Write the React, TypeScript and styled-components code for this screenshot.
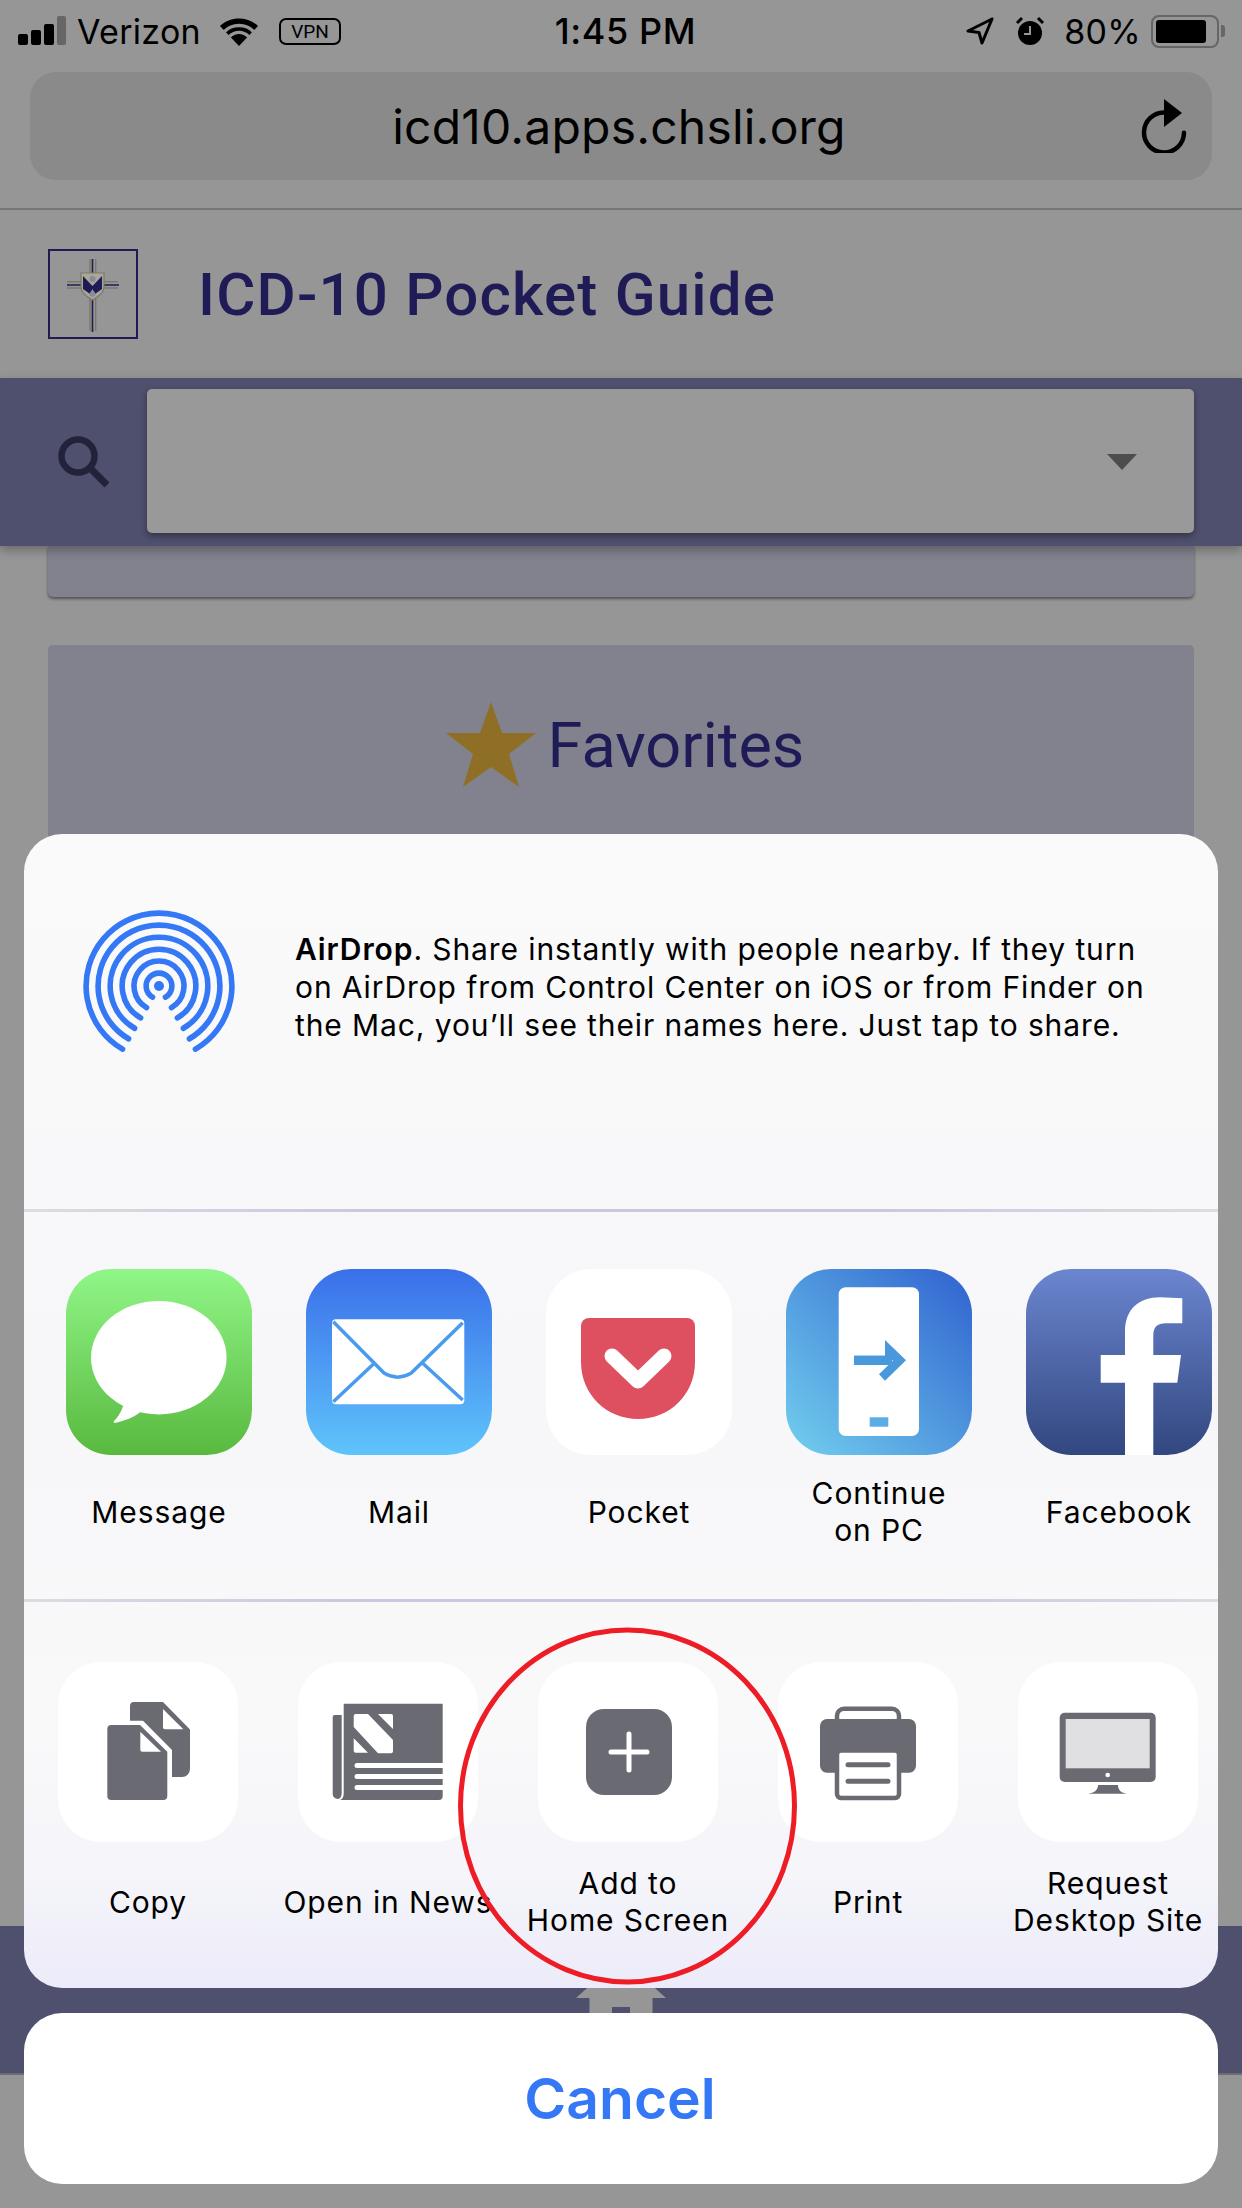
import { ReactNode } from "react";
import styled, { createGlobalStyle } from "styled-components";

const GlobalStyle = createGlobalStyle`
  html, body {
    margin: 0;
    padding: 0;
    background: #969696;
  }
  * {
    box-sizing: border-box;
  }
`;

const Page = styled.div`
  position: relative;
  display: flex;
  flex-direction: column;
  width: 1242px;
  height: 2208px;
  overflow: hidden;
  background: #969696;
  font-family: "Liberation Sans", sans-serif;
`;

const StatusBar = styled.div`
  display: grid;
  grid-template-columns: 1fr auto 1fr;
  align-items: center;
  height: 62px;
  padding: 0 17px 0 18px;
  color: #000;
  font-family: Inter, sans-serif;
  font-size: 34px;
  letter-spacing: 0.3px;
`;

const StatusGroup = styled.div<{ $end?: boolean }>`
  display: flex;
  align-items: center;
  justify-content: ${(p) => (p.$end ? "flex-end" : "flex-start")};
`;

const Carrier = styled.span`
  margin: 0 17px 0 9px;
`;

const Clock = styled.span`
  font-size: 36px;
  font-weight: 500;
  letter-spacing: 0.6px;
  margin-left: 8px;
`;

const VpnBadge = styled.span`
  display: flex;
  align-items: center;
  justify-content: center;
  width: 62px;
  height: 27px;
  margin-left: 19px;
  border: 2px solid #000;
  border-radius: 7px;
  font-family: Roboto, sans-serif;
  font-size: 19px;
  letter-spacing: 0;
`;

const Percent = styled.span`
  margin: 0 10px 0 19px;
`;

const BatteryShell = styled.div`
  display: flex;
  align-items: center;
  width: 68px;
  height: 33px;
  padding: 3px;
  border: 2px solid #666;
  border-radius: 8px;
`;

const BatteryLevel = styled.div`
  width: 50px;
  height: 23px;
  background: #000;
  border-radius: 3px;
`;

const BatteryNub = styled.div`
  width: 4px;
  height: 12px;
  margin-left: 2px;
  background: #666;
  border-radius: 0 3px 3px 0;
`;

const BrowserBar = styled.div`
  height: 148px;
  padding: 10px 30px 0;
  border-bottom: 2px solid #767676;
`;

const UrlPill = styled.div`
  display: grid;
  grid-template-columns: 68px 1fr 64px;
  align-items: center;
  height: 108px;
  padding-right: 8px;
  background: #8a8a8a;
  border-radius: 26px;
`;

const UrlText = styled.span`
  text-align: center;
  color: #000;
  font-family: Inter, sans-serif;
  font-size: 48px;
  letter-spacing: 0.2px;
`;

const AppHeader = styled.div`
  display: flex;
  align-items: center;
  gap: 60px;
  height: 168px;
  padding-left: 48px;
`;

const LogoBox = styled.div`
  width: 90px;
  height: 90px;
  border: 2px solid #1f1b56;
`;

const AppTitle = styled.h1`
  margin: 0;
  color: #1f1b56;
  font-family: Roboto, sans-serif;
  font-size: 60px;
  font-weight: 500;
  letter-spacing: 1.2px;
`;

const SearchBar = styled.div`
  position: relative;
  z-index: 1;
  display: flex;
  align-items: center;
  height: 168px;
  padding: 0 48px 0 57px;
  gap: 36px;
  background: #4f4f6e;
  box-shadow: 0 4px 10px rgba(0, 0, 0, 0.3);
`;

const SelectBox = styled.div`
  display: flex;
  align-items: center;
  justify-content: flex-end;
  flex: 1;
  height: 144px;
  margin-top: -2px;
  padding-right: 57px;
  background: #999;
  border-radius: 5px;
  box-shadow: 0 3px 6px rgba(0, 0, 0, 0.35);
`;

const Caret = styled.div`
  width: 0;
  height: 0;
  margin-top: 2px;
  border-left: 15.5px solid transparent;
  border-right: 15.5px solid transparent;
  border-top: 16px solid #4d4d4d;
`;

const Content = styled.div`
  display: flex;
  flex-direction: column;
  flex: 1;
  gap: 48px;
  min-height: 0;
  padding: 0 48px;
`;

const CardTail = styled.div`
  height: 51px;
  background: #82828f;
  border-radius: 0 0 5px 5px;
  box-shadow: 0 2px 3px rgba(0, 0, 0, 0.45);
`;

const FavoritesCard = styled.div`
  display: flex;
  justify-content: center;
  flex: 1;
  gap: 12px;
  padding: 57px 0 0 8px;
  background: #82828f;
  border-radius: 5px 5px 0 0;
`;

const FavoritesLabel = styled.span`
  margin-top: 8px;
  color: #1f1b56;
  font-family: Roboto, sans-serif;
  font-size: 63px;
  line-height: 72px;
`;

const FooterBar = styled.div`
  display: flex;
  justify-content: center;
  height: 149px;
  padding-top: 18px;
  background: #4f4f6e;
  border-bottom: 2px solid #6c6c78;
`;

const BottomGap = styled.div`
  height: 133px;
`;

const SheetLayer = styled.div`
  position: absolute;
  left: 24px;
  right: 24px;
  bottom: 24px;
  z-index: 2;
  display: flex;
  flex-direction: column;
  gap: 25px;
`;

const Sheet = styled.div`
  display: flex;
  flex-direction: column;
  height: 1154px;
  overflow: hidden;
  border-radius: 38px;
  background: linear-gradient(#fafafb 0, #f7f7f9 50%, #f9f9fa 78%, #f5f5fa 90%, #ecebf9 100%);
`;

const AirDropSection = styled.div`
  display: flex;
  gap: 56px;
  height: 375px;
  padding: 72px 0 0 55px;
`;

const AirDropText = styled.p`
  margin: 24px 0 0;
  color: #000;
  font-family: Inter, sans-serif;
  font-size: 30px;
  line-height: 38px;
  letter-spacing: 0.9px;
  white-space: nowrap;

  b {
    font-weight: 600;
  }
`;

const Separator = styled.div`
  flex: none;
  height: 3px;
  background: linear-gradient(90deg, #dcdce2, #c8c8de 30%, #c8c8de 70%, #dcdce2);
`;

const ShareRow = styled.div<{ $inset: number; $top: number; $height?: number }>`
  display: grid;
  flex: ${(p) => (p.$height ? "none" : "1")};
  grid-template-columns: repeat(5, 240px);
  align-content: start;
  height: ${(p) => (p.$height ? `${p.$height}px` : "auto")};
  padding: ${(p) => p.$top}px 0 0 ${(p) => p.$inset}px;
`;

const ShareCell = styled.div`
  display: flex;
  flex-direction: column;
  align-items: center;
`;

const Squircle = styled.div<{ $size: number; $fill: string }>`
  flex: none;
  width: ${(p) => p.$size}px;
  height: ${(p) => p.$size}px;
  overflow: hidden;
  border-radius: ${(p) => Math.round(p.$size * 0.24)}px;
  background: ${(p) => p.$fill};

  svg {
    display: block;
  }
`;

const ShareLabel = styled.div<{ $gap: number }>`
  display: flex;
  align-items: center;
  height: 74px;
  margin-top: ${(p) => p.$gap}px;
  text-align: center;
  color: #000;
  font-family: Inter, sans-serif;
  font-size: 30px;
  line-height: 37px;
  letter-spacing: 0.9px;
  white-space: nowrap;
`;

const CancelButton = styled.div`
  display: flex;
  align-items: center;
  justify-content: center;
  height: 171px;
  padding-right: 2px;
  background: #fff;
  border-radius: 38px;
  color: #3478f6;
  font-family: Inter, sans-serif;
  font-size: 57px;
  font-weight: 600;
`;

const Annotation = styled.svg`
  position: absolute;
  left: 458px;
  top: 1627px;
  z-index: 3;
`;

const GLYPH = "#6a6a72";

const SignalIcon = () => (
  <svg width="50" height="32" viewBox="0 0 50 32">
    <rect x="0" y="19" width="10" height="11" rx="2" fill="#000" />
    <rect x="13" y="15" width="10" height="15" rx="2" fill="#000" />
    <rect x="26" y="9" width="10" height="21" rx="2" fill="#000" />
    <rect x="39" y="1" width="9" height="29" rx="2" fill="#666" />
  </svg>
);

const WifiIcon = () => (
  <svg width="42" height="30" viewBox="0 0 42 30">
    <path d="M21 30 2 10C12 0 30 0 40 10Z" fill="#000" />
    <path d="M6.5 15.5C14 7.5 28 7.5 35.5 15.5M11.5 20.5C17 15 25 15 30.5 20.5" fill="none" stroke="#969696" strokeWidth="3.4" />
  </svg>
);

const LocationIcon = () => (
  <svg width="28" height="28" viewBox="0 0 28 28">
    <path d="M26 2 2 14l11 1.5L16 26Z" fill="none" stroke="#000" strokeWidth="3" strokeLinejoin="round" />
  </svg>
);

const AlarmIcon = () => (
  <svg width="30" height="30" viewBox="0 0 30 30" style={{ marginLeft: 21 }}>
    <circle cx="15" cy="17" r="12" fill="#000" />
    <path d="M15 10v8h-6" fill="none" stroke="#969696" strokeWidth="2" />
    <path d="M2 7 7 2M28 7l-5-5" fill="none" stroke="#000" strokeWidth="3" />
  </svg>
);

const ReloadIcon = () => (
  <svg width="48" height="54" viewBox="0 0 48 54">
    <path d="M24 13.5A20 20 0 1 0 44 33" fill="none" stroke="#000" strokeWidth="4.5" strokeLinecap="round" transform="rotate(2 24 33)" />
    <path d="M24 0 42 14 24 28Z" fill="#000" />
  </svg>
);

const CrestIcon = () => (
  <svg width="86" height="86" viewBox="0 0 86 86">
    <path d="M40 8v72M45.700 8v72M17 30.700h14M17 37h14M54 30.700h14M54 37h14" stroke="#7e7868" strokeWidth="1.4" />
    <path d="M42.500 8v73M17 34h52" stroke="#1f1b56" strokeWidth="1.6" />
    <path d="M31 22h23v14c0 6-6 10-11.500 13-5.500-3-11.500-7-11.500-13Z" fill="#a9a79a" stroke="#7e7868" strokeWidth="1.200" />
    <path d="M33 25 42.500 35 52 25V38L45 43 42.500 38 40 43 33 38Z" fill="#1f1b56" />
    <circle cx="42.500" cy="28" r="3" fill="#8a8a9a" />
    <circle cx="42.500" cy="43" r="2.800" fill="#8a8a9a" />
  </svg>
);

const SearchIcon = () => (
  <svg width="54" height="54" viewBox="0 0 54 54" style={{ flex: "none" }}>
    <circle cx="21" cy="21" r="16.5" fill="none" stroke="#22223a" strokeWidth="6.5" />
    <path d="M33 33 50 50" stroke="#22223a" strokeWidth="7" />
  </svg>
);

const StarIcon = () => (
  <svg width="90" height="85" viewBox="0 0 90 85">
    <path d="M45 0 56 31 90 31 63 52 73 85 45 65 17 85 27 52 0 31 34 31Z" fill="#8f6f25" />
  </svg>
);

const HomeIcon = () => (
  <svg width="108" height="108" viewBox="0 0 24 24">
    <path d="M10 20v-6h4v6h5v-8h3L12 3 2 12h3v8z" fill="#969696" />
  </svg>
);

const AirDropIcon = () => {
  const angle = (30 * Math.PI) / 180;
  return (
    <svg width="160" height="160" viewBox="0 0 160 160">
      <circle cx="80" cy="80" r="5" fill="#3478f6" />
      {[12.9, 25, 36.8, 48.8, 60.9, 72.9].map((r) => {
        const dx = (r * Math.sin(angle)).toFixed(2);
        const y = (80 + r * Math.cos(angle)).toFixed(2);
        return (
          <path
            key={r}
            d={`M${80 - Number(dx)} ${y}A${r} ${r} 0 1 1 ${80 + Number(dx)} ${y}`}
            fill="none"
            stroke="#3478f6"
            strokeWidth="5.6"
            strokeLinecap="round"
          />
        );
      })}
    </svg>
  );
};

const MessageGlyph = () => (
  <svg width="186" height="186" viewBox="0 0 186 186">
    <ellipse cx="92.8" cy="88.7" rx="67.8" ry="56.7" fill="#fff" />
    <path d="M52 130c6 4 6 6 4 10-2 5-5 9-8 12-1 2 1 2 3 1.500 8-2 16-5 23-10Z" fill="#fff" />
  </svg>
);

const MailGlyph = () => (
  <svg width="186" height="186" viewBox="0 0 186 186">
    <rect x="26" y="50.300" width="132.300" height="85" rx="4" fill="#fff" />
    <path
      d="M27.300 52.700 78.300 104.300Q91.700 112 105 104.300L156.700 53.700M27.300 132.700 68.300 94.300M116.700 94.300 156.700 131"
      fill="none"
      stroke="#4a9bee"
      strokeWidth="3.500"
    />
  </svg>
);

const PocketGlyph = () => (
  <svg width="186" height="186" viewBox="0 0 186 186">
    <path d="M35 57a8 8 0 0 1 8-8h98a8 8 0 0 1 8 8v36c0 32-25 57-57 57s-57-25-57-57Z" fill="#de4f5f" />
    <path d="M66 87 92 112 118 87" fill="none" stroke="#fff" strokeWidth="15" strokeLinecap="round" strokeLinejoin="round" />
  </svg>
);

const ContinueGlyph = () => (
  <svg width="186" height="186" viewBox="0 0 186 186">
    <rect x="52.700" y="18.300" width="80.300" height="148.700" rx="7" fill="#fff" />
    <path d="M68 86.700h31V71l21 20.300-21 20.400-6-6.400 14.300-14h-1.300V96H68Z" fill="#4a98dc" />
    <path d="M68 86.700h33V96H68Z" fill="#4a98dc" />
    <rect x="83.700" y="148.300" width="18.600" height="9.400" fill="#5aaee5" />
  </svg>
);

const FacebookGlyph = () => (
  <svg width="186" height="186" viewBox="0 0 186 186">
    <path
      d="M156.300 29.300V54.300H140C131 54.300 127.300 58 127.300 67V86H155L151.300 113.700H127.300V186H99V113.700H74.700V86H99V63C99 40 113 28.300 134 28.300Z"
      fill="#fff"
    />
  </svg>
);

const CopyGlyph = () => (
  <svg width="180" height="180" viewBox="0 0 180 180">
    <path d="M72 44a4 4 0 0 1 4-4H105L132 67.500V107a8 8 0 0 1-8 8H114V88L85 58.700H72Z" fill={GLYPH} />
    <path d="M105 47 125.300 67.200H107a2 2 0 0 1-2-2Z" fill="#fff" />
    <path d="M53.300 63H82L109.300 89.700V134a4 4 0 0 1-4 4H53.300a4 4 0 0 1-4-4V67a4 4 0 0 1 4-4Z" fill={GLYPH} />
    <path d="M82.300 69.700 103 89.700H84.300a2 2 0 0 1-2-2Z" fill="#fff" />
  </svg>
);

const NewsGlyph = () => (
  <svg width="180" height="180" viewBox="0 0 180 180">
    <path d="M34.700 55a2 2 0 0 1 2-2h7V131c0 3-1.500 6-4 6a5 5 0 0 1-5-5Z" fill={GLYPH} />
    <path d="M45.700 41.700H144.700V134a4 4 0 0 1-4 4H42c3-1 3.700-4 3.700-7Z" fill={GLYPH} />
    <path d="M55.700 54a2 2 0 0 1 2-2H70L95 78V89.300a2 2 0 0 1-2 2H80L55.700 65ZM80 52H93a2 2 0 0 1 2 2V67ZM55.700 76.300 70 90.700H57.700a2 2 0 0 1-2-2Z" fill="#fff" />
    <path d="M59 103.500H144.700M59 114.500H144.700M59 125.500H144.700" stroke="#fff" strokeWidth="5" strokeLinecap="round" />
  </svg>
);

const AddGlyph = () => (
  <svg width="180" height="180" viewBox="0 0 180 180">
    <rect x="48" y="47" width="86" height="86" rx="18" fill={GLYPH} />
    <path d="M91 72V108M73 90H109" stroke="#fff" strokeWidth="5" strokeLinecap="round" />
  </svg>
);

const PrintGlyph = () => (
  <svg width="180" height="180" viewBox="0 0 180 180">
    <rect x="59" y="46.700" width="62" height="24" rx="7" fill="#fff" stroke={GLYPH} strokeWidth="4.500" />
    <rect x="42" y="57" width="96" height="53.700" rx="7" fill={GLYPH} />
    <rect x="59" y="88.500" width="62" height="47.500" rx="4" fill="#fff" stroke={GLYPH} strokeWidth="4.500" />
    <path d="M70 102.700H110M70 119.300H110" stroke={GLYPH} strokeWidth="5" strokeLinecap="round" />
  </svg>
);

const DesktopGlyph = () => (
  <svg width="180" height="180" viewBox="0 0 180 180">
    <rect x="41.700" y="50.700" width="96" height="69.300" rx="5" fill={GLYPH} />
    <rect x="47.700" y="57" width="84" height="49.300" fill="#e0e0e2" />
    <circle cx="89.700" cy="113" r="2.300" fill="#fff" />
    <path d="M80 123h20c0 5 3 8 9 8.700H70.300c6-.7 9.700-3.700 9.700-8.700Z" fill={GLYPH} />
  </svg>
);

interface ShareItem {
  lines: string[];
  fill: string;
  glyph: ReactNode;
}

const appItems: ShareItem[] = [
  { lines: ["Message"], fill: "linear-gradient(#90f687, #59b93f)", glyph: <MessageGlyph /> },
  { lines: ["Mail"], fill: "linear-gradient(#3a6fe9, #5fc4fb)", glyph: <MailGlyph /> },
  { lines: ["Pocket"], fill: "#fff", glyph: <PocketGlyph /> },
  { lines: ["Continue", "on PC"], fill: "linear-gradient(to top right, #72cfee, #2f62cf)", glyph: <ContinueGlyph /> },
  { lines: ["Facebook"], fill: "linear-gradient(#6b86d0, #32477f)", glyph: <FacebookGlyph /> },
];

const actionItems: ShareItem[] = [
  { lines: ["Copy"], fill: "#fff", glyph: <CopyGlyph /> },
  { lines: ["Open in News"], fill: "#fff", glyph: <NewsGlyph /> },
  { lines: ["Add to", "Home Screen"], fill: "#fff", glyph: <AddGlyph /> },
  { lines: ["Print"], fill: "#fff", glyph: <PrintGlyph /> },
  { lines: ["Request", "Desktop Site"], fill: "#fff", glyph: <DesktopGlyph /> },
];

const renderCells = (items: ShareItem[], size: number, gap: number) =>
  items.map((item) => (
    <ShareCell key={item.lines.join(" ")}>
      <Squircle $size={size} $fill={item.fill}>
        {item.glyph}
      </Squircle>
      <ShareLabel $gap={gap}>
        <span>
          {item.lines.map((line, i) => (
            <span key={line}>
              {i > 0 && <br />}
              {line}
            </span>
          ))}
        </span>
      </ShareLabel>
    </ShareCell>
  ));

const App = () => (
  <Page>
    <GlobalStyle />
    <StatusBar>
      <StatusGroup>
        <SignalIcon />
        <Carrier>Verizon</Carrier>
        <WifiIcon />
        <VpnBadge>VPN</VpnBadge>
      </StatusGroup>
      <Clock>1:45 PM</Clock>
      <StatusGroup $end>
        <LocationIcon />
        <AlarmIcon />
        <Percent>80%</Percent>
        <BatteryShell>
          <BatteryLevel />
        </BatteryShell>
        <BatteryNub />
      </StatusGroup>
    </StatusBar>
    <BrowserBar>
      <UrlPill>
        <span />
        <UrlText>icd10.apps.chsli.org</UrlText>
        <ReloadIcon />
      </UrlPill>
    </BrowserBar>
    <AppHeader>
      <LogoBox>
        <CrestIcon />
      </LogoBox>
      <AppTitle>ICD-10 Pocket Guide</AppTitle>
    </AppHeader>
    <SearchBar>
      <SearchIcon />
      <SelectBox>
        <Caret />
      </SelectBox>
    </SearchBar>
    <Content>
      <CardTail />
      <FavoritesCard>
        <StarIcon />
        <FavoritesLabel>Favorites</FavoritesLabel>
      </FavoritesCard>
    </Content>
    <FooterBar>
      <HomeIcon />
    </FooterBar>
    <BottomGap />

    <SheetLayer>
      <Sheet>
        <AirDropSection>
          <AirDropIcon />
          <AirDropText>
            <b>AirDrop</b>. Share instantly with people nearby. If they turn
            <br />
            on AirDrop from Control Center on iOS or from Finder on
            <br />
            the Mac, you’ll see their names here. Just tap to share.
          </AirDropText>
        </AirDropSection>
        <Separator />
        <ShareRow $inset={15} $top={57} $height={387}>
          {renderCells(appItems, 186, 20)}
        </ShareRow>
        <Separator />
        <ShareRow $inset={4} $top={60}>
          {renderCells(actionItems, 180, 23)}
        </ShareRow>
      </Sheet>
      <CancelButton>Cancel</CancelButton>
    </SheetLayer>

    <Annotation width="340" height="358" viewBox="0 0 340 358">
      <ellipse cx="169.500" cy="179" rx="167" ry="176" fill="none" stroke="#ee1c25" strokeWidth="5" />
    </Annotation>
  </Page>
);

export default App;
